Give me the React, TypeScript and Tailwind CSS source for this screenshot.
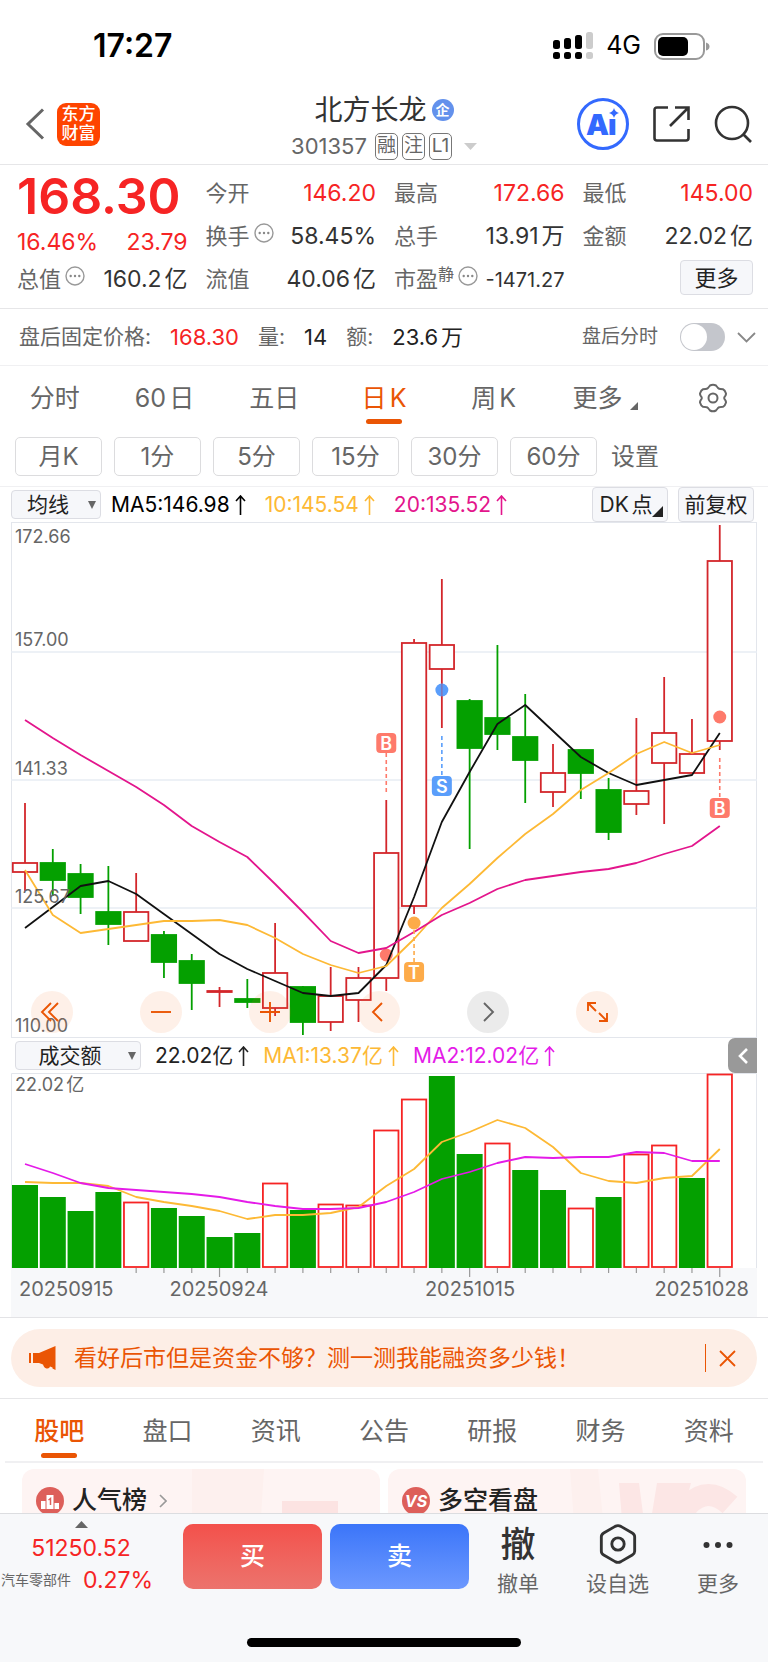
import { useState } from 'react';
import type { ReactNode } from 'react';

type Candle = {
    high: number;
    top: number;
    bottom: number;
    low: number;
    up: boolean;
};

const RED = '#d3262b';
const GREEN = '#04a000';
const STEP = 27.79;
const FIRST_X = 14;

const xAt = (i: number) => FIRST_X + i * STEP;

const toPoints = (values: number[]) => values.map((y, i) => `${xAt(i).toFixed(1)},${y}`).join(' ');

const c = (high: number, top: number, bottom: number, low: number, up: boolean): Candle => ({
    high,
    top,
    bottom,
    low,
    up,
});

const candles: Candle[] = [
    c(281, 341, 350, 369, true),
    c(327, 341, 358, 374, false),
    c(342, 352, 375, 392, false),
    c(344, 390, 402, 423, false),
    c(351, 390, 419, 419, true),
    c(409, 413, 440, 456, false),
    c(432, 439, 461, 488, false),
    c(465, 469, 470, 485, true),
    c(457, 477, 480, 486, false),
    c(401, 451, 486, 494, true),
    c(464, 465, 500, 513, false),
    c(445, 474, 500, 509, true),
    c(445, 456, 478, 500, true),
    c(278, 331, 456, 469, true),
    c(117, 121, 384, 392, true),
    c(57, 123, 147, 206, true),
    c(177, 179, 226, 327, false),
    c(123, 196, 212, 228, false),
    c(172, 215, 238, 281, false),
    c(222, 251, 270, 285, true),
    c(228, 228, 251, 277, false),
    c(256, 268, 310, 318, false),
    c(196, 269, 282, 293, true),
    c(155, 211, 241, 302, true),
    c(197, 232, 251, 251, true),
    c(3, 39, 219, 228, true),
];

const ma5 = [
    406, 385, 364, 359, 372, 392, 412, 432, 447, 459, 471, 474, 471, 443, 375, 300, 250, 202, 183, 209, 235, 251, 263,
    258, 253, 211,
];
const ma10 = [
    348, 393, 411, 407, 403, 399, 399, 398, 403, 416, 432, 443, 451, 444, 417, 386, 362, 336, 312, 292, 268, 251, 232,
    220, 231, 223,
];
const ma20 = [
    198, 216, 233, 249, 265, 283, 304, 320, 335, 362, 390, 419, 431, 426, 410, 393, 381, 367, 358, 354, 350, 347, 341,
    332, 324, 304,
];

const volumeTops = [
    112, 124, 138, 119, 129, 135, 143, 164, 160, 110, 137, 131, 132, 57, 26, 3, 81, 70, 97, 117, 135, 124, 81, 72, 105,
    1,
];
const volumeUp = [4, 9, 11, 12, 13, 14, 17, 20, 22, 23, 25];
const vma1 = [
    109, 110, 110, 113, 124, 129, 133, 138, 146, 142, 142, 140, 134, 113, 96, 69, 59, 47, 55, 74, 100, 108, 110, 105,
    103, 76,
];
const vma2 = [
    91, 100, 110, 115, 117, 119, 121, 124, 129, 133, 136, 136, 135, 129, 119, 106, 99, 90, 84, 85, 84, 84, 79, 80, 88,
    88,
];

const priceLabels = [
    { text: '172.66', y: 21 },
    { text: '157.00', y: 124 },
    { text: '141.33', y: 253 },
    { text: '125.67', y: 381 },
    { text: '110.00', y: 510 },
];

const markers = [
    { text: 'B', i: 13, box: 211, dot: 433, from: 231, to: 272, color: '#fe7a6b' },
    { text: 'S', i: 15, box: 254, dot: 168, from: 214, to: 254, color: '#5a9efb' },
    { text: 'T', i: 14, box: 440, dot: 401, from: 401, to: 440, color: '#fdab49' },
    { text: 'B', i: 25, box: 276, dot: 195, from: 236, to: 276, color: '#fe7a6b' },
];

function StatusBar() {
    return (
        <div className="flex h-[92px] items-center justify-between pr-[58px] pl-[93px] text-black">
            <span className="text-[32px] font-semibold">17:27</span>
            <div className="flex items-center gap-[13px]">
                <svg width="40" height="28" viewBox="0 0 40 28">
                    <g fill="#000">
                        <rect x="0" y="8" width="7" height="9" rx="2.5" />
                        <rect x="11" y="6" width="7" height="11" rx="2.5" />
                        <rect x="22" y="3" width="7" height="14" rx="2.5" />
                        <rect x="0" y="20" width="7" height="7" rx="2.5" />
                        <rect x="11" y="20" width="7" height="7" rx="2.5" />
                        <rect x="22" y="20" width="7" height="7" rx="2.5" />
                    </g>
                    <g fill="#ccc">
                        <rect x="33" y="0" width="7" height="17" rx="2.5" />
                        <rect x="33" y="20" width="7" height="7" rx="2.5" />
                    </g>
                </svg>
                <span className="text-[25px]">4G</span>
                <svg width="56" height="27" viewBox="0 0 56 27">
                    <rect x="1" y="1" width="49" height="25" rx="8" fill="none" stroke="#999" strokeWidth="2" />
                    <rect x="4" y="4" width="30" height="19" rx="5" fill="#000" />
                    <path d="M52 9.500q3.500 1 3.500 4t-3.500 4z" fill="#999" />
                </svg>
            </div>
        </div>
    );
}

function Header() {
    return (
        <header className="grid h-[73px] grid-cols-[1fr_auto_1fr] items-center border-b border-[#e6e6e8] px-4">
            <div className="flex items-center gap-3 pb-2 pl-[9px]">
                <button aria-label="返回">
                    <svg width="20" height="32" viewBox="0 0 20 32" fill="none" stroke="#666" strokeWidth="3">
                        <path d="M18 1.500 3 16l15 14.500" />
                    </svg>
                </button>
                <div className="flex size-[43px] flex-col items-center justify-center rounded-[9px] bg-[#fe4400] text-[17px] leading-[19px] font-medium text-white">
                    <span>东方</span>
                    <span>财富</span>
                </div>
            </div>
            <div className="flex flex-col items-center">
                <h1 className="flex items-center gap-[5px] text-[28px] leading-[36px] text-[#333]">
                    北方长龙
                    <span className="flex size-[22px] items-center justify-center rounded-full bg-[#6391ec] text-[14px] font-bold text-white">
                        企
                    </span>
                </h1>
                <button className="flex items-center gap-1 text-[22px] leading-[36px] text-[#666]">
                    <span className="mr-1">301357</span>
                    {['融', '注', 'L1'].map((tag) => (
                        <span
                            key={tag}
                            className="flex h-[27px] min-w-[23px] items-center justify-center rounded-[5px] border border-[#777] px-px text-[19px]"
                        >
                            {tag}
                        </span>
                    ))}
                    <svg className="ml-2" width="13" height="7" viewBox="0 0 13 7" fill="#ccc">
                        <path d="M0 0h13L6.500 7z" />
                    </svg>
                </button>
            </div>
            <div className="flex items-center justify-end gap-6 pb-2">
                <button aria-label="Ai">
                    <svg width="52" height="52" viewBox="0 0 52 52">
                        <circle cx="26" cy="26" r="24.500" fill="none" stroke="#3369fe" strokeWidth="3" />
                        <g fill="#3369fe" className="font-black" fontSize="29">
                            <text x="9" y="37">
                                A
                            </text>
                            <text x="31" y="37">
                                ı
                            </text>
                        </g>
                        <path d="M37 10q1 4 5 5-4 1-5 5-1-4-5-5 4-1 5-5z" fill="#3369fe" />
                    </svg>
                </button>
                <button aria-label="分享">
                    <svg width="37" height="36" viewBox="0 0 37 36" fill="none" stroke="#333" strokeWidth="2.600">
                        <path d="M15 1.500H4q-2.500 0-2.500 2.500v28q0 2.500 2.500 2.500h29q2.500 0 2.500-2.500V23M22 1.500h13.500V14M35 2 17 20" />
                    </svg>
                </button>
                <button aria-label="搜索">
                    <svg width="38" height="38" viewBox="0 0 38 38" fill="none" stroke="#333" strokeWidth="2.600">
                        <circle cx="18" cy="18" r="16" />
                        <path d="m29 29 8 8" />
                    </svg>
                </button>
            </div>
        </header>
    );
}

function DotsIcon() {
    return (
        <svg className="mb-2 shrink-0" width="20" height="20" viewBox="0 0 20 20">
            <circle cx="10" cy="10" r="9" fill="none" stroke="#999" strokeWidth="1.400" />
            <g fill="#888">
                <circle cx="5.700" cy="10" r="1.200" />
                <circle cx="10" cy="10" r="1.200" />
                <circle cx="14.300" cy="10" r="1.200" />
            </g>
        </svg>
    );
}

type StatProps = {
    label: string;
    value: string;
    red?: boolean;
    sup?: string;
    dots?: boolean;
    small?: boolean;
};

function Stat({ label, value, red, sup, dots, small }: StatProps) {
    return (
        <div className="flex h-[43px] items-center justify-between whitespace-nowrap">
            <span className="flex items-center gap-1 text-[22px] text-[#666]">
                <span>{label}</span>
                {sup && <span className="-ml-1 mb-3 text-[16px] leading-5">{sup}</span>}
                {dots && <DotsIcon />}
            </span>
            <span className={`${small ? 'text-[20px]' : 'text-[23px]'} ${red ? 'text-[#f62424]' : 'text-[#333]'}`}>
                {value}
            </span>
        </div>
    );
}

function Quote() {
    return (
        <section className="grid grid-cols-4 gap-x-[18px] border-b border-[#e6e6e8] py-[7px] pr-[15px] pl-[17px] [text-autospace:normal]">
            <div>
                <div className="flex h-[48px] items-center text-[50px] font-semibold text-[#f62424]">168.30</div>
                <div className="flex h-[38px] items-end justify-between text-[23px] leading-8 text-[#f62424]">
                    <span>16.46%</span>
                    <span>23.79</span>
                </div>
                <Stat label="总值" value="160.2亿" dots />
            </div>
            <div>
                <Stat label="今开" value="146.20" red />
                <Stat label="换手" value="58.45%" dots />
                <Stat label="流值" value="40.06亿" />
            </div>
            <div>
                <Stat label="最高" value="172.66" red />
                <Stat label="总手" value="13.91万" />
                <Stat label="市盈" value="-1471.27" sup="静" dots small />
            </div>
            <div>
                <Stat label="最低" value="145.00" red />
                <Stat label="金额" value="22.02亿" />
                <div className="flex justify-end pt-0.5">
                    <button className="h-[35px] w-[73px] rounded-[4px] border border-[#dcdde3] bg-[#f6f7fa] text-[22px] leading-8 text-[#222]">
                        更多
                    </button>
                </div>
            </div>
        </section>
    );
}

function AfterHours() {
    const [on, setOn] = useState(false);

    return (
        <section className="flex h-[57px] items-center justify-between border-b border-[#f0f0f2] pr-3 pl-[19px] text-[21px] text-[#666]">
            <div className="flex items-center gap-[19px]">
                <span>盘后固定价格:</span>
                <span className="text-[22px] text-[#f62424]">168.30</span>
                <span>量:</span>
                <span className="text-[22px] text-[#222]">14</span>
                <span>额:</span>
                <span className="text-[22px] text-[#222] [text-autospace:normal]">23.6万</span>
            </div>
            <div className="flex items-center gap-3">
                <label className="flex items-center gap-[22px] text-[19px]">
                    盘后分时
                    <input
                        type="checkbox"
                        checked={on}
                        onChange={() => setOn(!on)}
                        className="h-7 w-[45px] appearance-none rounded-full bg-[#c4c6cc] p-px before:block before:size-[26px] before:rounded-full before:bg-white checked:bg-[#ea5504] checked:before:translate-x-4"
                    />
                </label>
                <svg width="19" height="11" viewBox="0 0 19 11" fill="none" stroke="#888" strokeWidth="1.800">
                    <path d="m1 1 8.500 8.500L18 1" />
                </svg>
            </div>
        </section>
    );
}

function PeriodTabs() {
    const [active, setActive] = useState('日K');
    const tabs = ['分时', '60日', '五日', '日K', '周K', '更多'];

    return (
        <nav className="grid grid-cols-7 pt-3 text-[25px] text-[#666] [text-autospace:normal]">
            {tabs.map((tab) => (
                <button
                    key={tab}
                    onClick={() => setActive(tab)}
                    className={`flex h-[46px] flex-col items-center justify-between ${tab === active ? 'text-[#ea5504]' : ''}`}
                >
                    <span className={`flex items-end leading-10 ${tab === '更多' ? 'pl-1' : ''}`}>
                        {tab}
                        {tab === '更多' && (
                            <svg className="ml-2" width="8" height="16" viewBox="0 0 8 16" fill="#666">
                                <path d="M8 0v8H0z" />
                            </svg>
                        )}
                    </span>
                    {tab === active && <span className="h-[5px] w-9 shrink-0 rounded-full bg-[#ea5504]" />}
                </button>
            ))}
            <button aria-label="图表设置" className="flex h-10 items-center justify-center">
                <svg width="30" height="30" viewBox="0 0 30 30" fill="none" stroke="#666" strokeWidth="2">
                    <path
                        strokeLinejoin="round"
                        d="M12 2.500q3-1.500 6 0l2 2.500q1 1 2.500 1l2.500.2q2 .8 3 4.300 0 1-.5 2l-1 1.500q-.5 1 0 2l1 1.500q.5 1 .5 2-1 3.500-3 4.300l-2.500.2q-1.500 0-2.500 1l-2 2.500q-3 1.500-6 0l-2-2.500q-1-1-2.500-1l-2.500-.2q-2-.8-3-4.300 0-1 .5-2l1-1.500q.5-1 0-2l-1-1.500q-.5-1-.5-2 1-3.500 3-4.300L7.500 6q1.500 0 2.500-1z"
                    />
                    <circle cx="15" cy="15" r="4.500" />
                </svg>
            </button>
        </nav>
    );
}

function MinuteButtons() {
    return (
        <div className="flex gap-3 border-b border-[#f0f0f2] px-[15px] pt-[13px] pb-[10px] text-[24px] text-[#666]">
            {['月K', '1分', '5分', '15分', '30分', '60分'].map((item) => (
                <button key={item} className="h-[39px] w-[87px] rounded-[5px] border border-[#dcdcde] leading-9">
                    {item}
                </button>
            ))}
            <button className="px-0.5 leading-9">设置</button>
        </div>
    );
}

type PickerProps = {
    name: string;
    label: string;
    width: string;
};

function Picker({ name, label, width }: PickerProps) {
    return (
        <div className={`relative flex items-center ${width}`}>
            <select
                aria-label={label}
                className="h-[29px] w-full appearance-none rounded-[4px] border border-[#dcdde3] bg-[#f6f7fa] pr-4 text-center text-[21px] leading-6 text-[#222]"
            >
                <option>{name}</option>
            </select>
            <svg className="absolute right-[5px]" width="8" height="8" viewBox="0 0 8 8" fill="#666">
                <path d="M0 0h8L4 8z" />
            </svg>
        </div>
    );
}

function Indicator({ children, color }: { children: ReactNode; color: string }) {
    return (
        <span className={`flex items-center gap-[5px] ${color}`}>
            {children}
            <svg width="11" height="20" viewBox="0 0 11 20" fill="none" stroke="currentColor" strokeWidth="1.600">
                <path d="M5.500 20V1M1 6l4.500-5L10 6" />
            </svg>
        </span>
    );
}

function CandleChart() {
    return (
        <svg className="block h-auto w-full" viewBox="0 0 746 516">
            <rect x="0.500" y="0.500" width="745" height="515" fill="none" stroke="#e3e6ec" />
            <path d="M0 130h746M0 258h746M0 386h746" stroke="#e8edf4" strokeWidth="1.500" />
            {candles.map((k, i) => {
                const x = xAt(i);
                const color = k.up ? RED : GREEN;
                return (
                    <g key={i} stroke={color} strokeWidth="1.800">
                        <path d={`M${x} ${k.high}V${k.low}`} />
                        <rect
                            x={x - 12.2}
                            y={k.top}
                            width="24.400"
                            height={k.bottom - k.top}
                            fill={k.up ? '#fff' : color}
                        />
                    </g>
                );
            })}
            {markers.map((m, i) => (
                <circle key={i} cx={xAt(m.i)} cy={m.dot} r="6.500" fill={m.color} />
            ))}
            <path d={`M${xAt(15)} 162v13`} stroke={RED} strokeOpacity="0.3" strokeWidth="1.700" />
            <g fill="none" strokeWidth="1.800" strokeLinejoin="round">
                <polyline points={toPoints(ma5)} stroke="#111" />
                <polyline points={toPoints(ma10)} stroke="#fdb935" />
                <polyline points={toPoints(ma20)} stroke="#e3158c" />
            </g>
            {markers.map((m, i) => (
                <g key={i}>
                    <path d={`M${xAt(m.i)} ${m.from}V${m.to}`} stroke={m.color} strokeWidth="1.600" strokeDasharray="4 3" />
                    <rect x={xAt(m.i) - 10} y={m.box} width="20" height="20" rx="4" fill={m.color} />
                    <text
                        x={xAt(m.i)}
                        y={m.box + 16.5}
                        fill="#fff"
                        fontSize="18"
                        textAnchor="middle"
                        className="font-semibold"
                    >
                        {m.text}
                    </text>
                </g>
            ))}
            <g fill="#666" fontSize="18">
                {priceLabels.map((label) => (
                    <text key={label.text} x="4" y={label.y}>
                        {label.text}
                    </text>
                ))}
            </g>
        </svg>
    );
}

const chartControls = [
    { label: '最左', d: 'M20 12l-9 9 9 9M27 12l-9 9 9 9' },
    { label: '缩小', d: 'M11 21h20' },
    { label: '放大', d: 'M11 21h20M21 11v20' },
    { label: '左移', d: 'M24 12l-9 9 9 9' },
    { label: '右移', d: 'M17 12l9 9-9 9' },
    { label: '全屏', d: 'M20 12h-8v8M12 12l8 8M23 30h8v-8M31 30l-8-8' },
];

function ChartControls() {
    return (
        <div className="absolute bottom-[5px] left-5 flex gap-[67px]">
            {chartControls.map((item) => (
                <button
                    key={item.label}
                    aria-label={item.label}
                    className={`size-[42px] rounded-full ${item.label === '右移' ? 'bg-black/8 text-[#666]' : 'bg-[#f56a20]/10 text-[#ea5504]'}`}
                >
                    <svg width="42" height="42" viewBox="0 0 42 42" fill="none" stroke="currentColor" strokeWidth="1.900">
                        <path d={item.d} />
                    </svg>
                </button>
            ))}
        </div>
    );
}

function VolumeChart() {
    return (
        <svg className="block h-auto w-full" viewBox="0 0 746 244">
            <rect y="195" width="746" height="49" fill="#f7f8fa" />
            <path d="M0.500 195V0.500h745V195" fill="none" stroke="#e3e6ec" />
            {volumeTops.map((top, i) => {
                const up = volumeUp.includes(i);
                return up ? (
                    <rect
                        key={i}
                        x={xAt(i) - 12.2}
                        y={top + 0.5}
                        width="24.400"
                        height={193.5 - top}
                        fill="#fff"
                        stroke="#f62424"
                        strokeWidth="1.800"
                    />
                ) : (
                    <rect key={i} x={xAt(i) - 13} y={top} width="26" height={195 - top} fill={GREEN} />
                );
            })}
            <g fill="none" strokeWidth="1.800" strokeLinejoin="round">
                <polyline points={toPoints(vma1)} stroke="#fdb935" />
                <polyline points={toPoints(vma2)} stroke="#e41be8" />
            </g>
            {volumeTops.map((_, i) =>
                i > 3 ? (
                    <path key={i} d={`M${xAt(i)} 195v${[7, 16, 25].includes(i) ? 9 : 5}`} stroke="#999" strokeWidth="1.200" />
                ) : null
            )}
            <g fill="#666" className="[text-autospace:normal]">
                <text x="4" y="18" fontSize="18">
                    22.02亿
                </text>
                <g fontSize="20">
                    <text x="8" y="223">
                        20250915
                    </text>
                    <text x="208" y="223" textAnchor="middle">
                        20250924
                    </text>
                    <text x="459" y="223" textAnchor="middle">
                        20251015
                    </text>
                    <text x="738" y="223" textAnchor="end">
                        20251028
                    </text>
                </g>
            </g>
        </svg>
    );
}

function Charts() {
    const toolButton = 'h-[35px] w-[76px] rounded-[4px] border border-[#dcdde3] bg-[#f6f7fa] text-[21px] leading-7 text-[#222]';

    return (
        <section className="border-b border-[#e3e3e6] px-[11px]">
            <div className="flex h-[35px] items-center justify-between">
                <div className="flex items-center gap-[10px] text-[21px]">
                    <Picker name="均线" label="主图指标" width="w-[90px]" />
                    <div className="flex gap-[19px]">
                        <Indicator color="text-black">MA5:146.98</Indicator>
                        <Indicator color="text-[#fdb935]">10:145.54</Indicator>
                        <Indicator color="text-[#e3158c]">20:135.52</Indicator>
                    </div>
                </div>
                <div className="flex gap-[10px] pr-[3px] [text-autospace:normal]">
                    <button className={`relative pr-2 ${toolButton}`}>
                        DK点
                        <svg className="absolute right-1 bottom-1" width="11" height="11" viewBox="0 0 11 11" fill="#222">
                            <path d="M11 0v11H0z" />
                        </svg>
                    </button>
                    <button className={toolButton}>前复权</button>
                </div>
            </div>
            <div className="relative">
                <CandleChart />
                <ChartControls />
            </div>
            <div className="flex h-[35px] items-center justify-between pl-1">
                <div className="flex items-center gap-[14px] text-[21px]">
                    <Picker name="成交额" label="副图指标" width="w-[126px]" />
                    <Indicator color="text-[#222]">22.02亿</Indicator>
                    <Indicator color="text-[#fdb935]">MA1:13.37亿</Indicator>
                    <Indicator color="text-[#e41be8]">MA2:12.02亿</Indicator>
                </div>
                <button
                    aria-label="展开"
                    className="flex h-[35px] w-[29px] items-center justify-center rounded-l-[7px] bg-[#999]"
                >
                    <svg width="10" height="16" viewBox="0 0 10 16" fill="none" stroke="#fff" strokeWidth="2.600">
                        <path d="M9 1 2 8l7 7" />
                    </svg>
                </button>
            </div>
            <VolumeChart />
        </section>
    );
}

function Banner() {
    return (
        <div className="border-b border-[#e6e6e8] px-[11px] py-[11px]">
            <div className="flex h-[58px] items-center rounded-full bg-[#fdeee6] pr-[21px] pl-[18px] text-[#ea5504]">
                <svg width="27" height="24" viewBox="0 0 27 24" fill="currentColor">
                    <path d="M0 7h2v10H0zM4 7h6L26.500 0v24l-3-1.500v-1L21 20.500q-.5 2.500-3.500 2-2.500-.5-3.500-4L10 17H4z" />
                </svg>
                <a href="#margin" className="ml-[18px] flex-1 text-[23px]">
                    看好后市但是资金不够？测一测我能融资多少钱！
                </a>
                <span className="h-7 w-px bg-[#ea5504]" />
                <button aria-label="关闭" className="ml-[13px]">
                    <svg width="17" height="17" viewBox="0 0 17 17" stroke="currentColor" strokeWidth="1.800">
                        <path d="m1 1 15 15M16 1 1 16" />
                    </svg>
                </button>
            </div>
        </div>
    );
}

function InfoTabs() {
    const [active, setActive] = useState('股吧');

    return (
        <nav className="mx-[5px] grid grid-cols-7 border-b-2 border-[#f0f0f2] text-[25px] text-[#666]">
            {['股吧', '盘口', '资讯', '公告', '研报', '财务', '资料'].map((tab) => (
                <button
                    key={tab}
                    onClick={() => setActive(tab)}
                    className={`flex h-[62px] flex-col items-center justify-between pt-3 pb-[3px] ${tab === active ? 'font-medium text-[#ea5504]' : ''}`}
                >
                    <span className="leading-10">{tab}</span>
                    {tab === active && <span className="h-[5px] w-9 shrink-0 rounded-full bg-[#ea5504]" />}
                </button>
            ))}
        </nav>
    );
}

function Cards() {
    return (
        <section className="grid grid-cols-2 gap-2 px-[22px] pt-[6px] text-[25px] font-medium text-[#222]">
            <div className="relative h-40 overflow-hidden rounded-xl bg-[#fef4f3]">
                <svg className="absolute top-0 right-0" width="188" height="160" viewBox="0 0 188 160">
                    <path d="M0 0h72l-10 160H0z" fill="#fdf0ee" />
                    <path d="M90 32h56v128H90z" fill="#fce3e2" />
                </svg>
                <div className="relative flex h-[64px] items-center gap-2 pl-[14px]">
                    <svg width="28" height="28" viewBox="0 0 28 28">
                        <circle cx="14" cy="14" r="14" fill="#dd5f5a" />
                        <path d="M5 14h4.500v8H5zM10.500 8h7v14h-7zM18.500 16H23v6h-4.500z" fill="#fff" />
                        <path d="m12.500 13 2-1.500V18" fill="none" stroke="#dd5f5a" strokeWidth="1.500" />
                    </svg>
                    <span>人气榜</span>
                    <svg className="ml-1" width="8" height="14" viewBox="0 0 8 14" fill="none" stroke="#999" strokeWidth="1.600">
                        <path d="m1 1 6 6-6 6" />
                    </svg>
                </div>
            </div>
            <div className="relative h-40 overflow-hidden rounded-xl bg-[#fef4f3]">
                <svg className="absolute top-0 right-0" width="176" height="160" viewBox="0 0 176 160">
                    <path d="M0 0h28l16 160H12z" fill="#fdf0ee" />
                    <path d="M49 14h20l8 61 10-61h34L84 150H60z" fill="#fce6e5" />
                    <path d="M160 36q-22-20-42 0-14 22 6 50" fill="none" stroke="#fce6e5" strokeWidth="22" />
                </svg>
                <div className="relative flex h-[64px] items-center gap-2 pl-[14px]">
                    <span className="flex size-7 items-center justify-center rounded-full bg-[#dd5f5a] text-[16px] font-bold text-white italic">
                        VS
                    </span>
                    <span>多空看盘</span>
                </div>
            </div>
        </section>
    );
}

function BottomBar() {
    return (
        <footer className="shrink-0 border-t border-[#dcdde0] bg-[#f7f8fa]">
            <div className="flex h-[124px] items-start">
                <button className="flex w-[162px] flex-col items-center pt-[7px] text-[#f62424]">
                    <svg width="13" height="7" viewBox="0 0 13 7" fill="#666">
                        <path d="M0 7h13L6.500 0z" />
                    </svg>
                    <span className="mt-1 text-[23px] leading-8">51250.52</span>
                    <span className="flex w-full items-center gap-3 pl-px text-[23px] leading-8">
                        <span className="text-[14px] text-[#666]">汽车零部件</span>
                        0.27%
                    </span>
                </button>
                <div className="ml-[21px] flex flex-1 gap-2 pt-[10px] text-[25px] font-medium text-white">
                    <button className="h-[65px] flex-1 rounded-[10px] bg-linear-to-b from-[#f3504b] to-[#ec736d]">买</button>
                    <button className="h-[65px] flex-1 rounded-[10px] bg-linear-to-b from-[#3b75f9] to-[#6c98fe]">卖</button>
                </div>
                <div className="flex w-[299px] text-[21px] leading-8 text-[#666]">
                    <button className="flex w-[98px] flex-col items-center pt-[10px]">
                        <span className="h-11 text-[35px] leading-10 font-medium text-[#333]">撤</span>
                        撤单
                    </button>
                    <button className="flex w-[101px] flex-col items-center pt-[10px]">
                        <svg className="mb-1" width="40" height="40" viewBox="0 0 40 42" fill="none" stroke="#333" strokeWidth="3">
                            <path
                                strokeLinejoin="round"
                                d="M17 2.500q3-1.500 6 0l12 7q2.500 1.500 2.500 4v15q0 2.500-2.500 4l-12 7q-3 1.500-6 0l-12-7q-2.500-1.500-2.500-4v-15q0-2.500 2.500-4z"
                            />
                            <circle cx="20" cy="21" r="6.500" />
                        </svg>
                        设自选
                    </button>
                    <button className="flex w-[100px] flex-col items-center pt-[10px]">
                        <svg className="mb-1" width="40" height="40" viewBox="0 0 40 40" fill="#333">
                            <circle cx="8.500" cy="21" r="3" />
                            <circle cx="20" cy="21" r="3" />
                            <circle cx="31.500" cy="21" r="3" />
                        </svg>
                        更多
                    </button>
                </div>
            </div>
            <div className="mx-auto mb-[15px] h-[9px] w-[274px] rounded-full bg-black" />
        </footer>
    );
}

function App() {
    return (
        <div className="flex h-screen flex-col bg-white font-['Inter','Noto_Sans_CJK_SC',sans-serif]" lang="zh-CN">
            <main className="min-h-0 flex-1 overflow-hidden">
                <StatusBar />
                <Header />
                <Quote />
                <AfterHours />
                <PeriodTabs />
                <MinuteButtons />
                <Charts />
                <Banner />
                <InfoTabs />
                <Cards />
            </main>
            <BottomBar />
        </div>
    );
}

export default App;
